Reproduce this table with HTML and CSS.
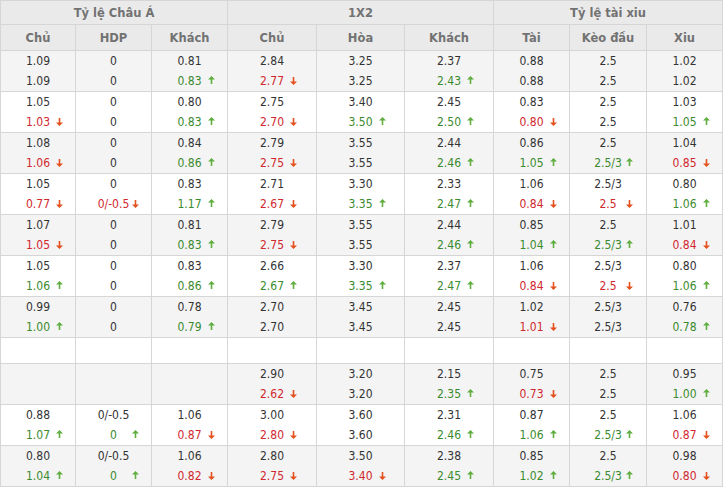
FILE: index.html
```html
<!DOCTYPE html>
<html lang="vi">
<head>
<meta charset="utf-8">
<title>Tỷ lệ kèo</title>
<link rel="stylesheet" href="styles.css">
</head>
<body>
<svg class="defs" width="0" height="0" aria-hidden="true">
  <symbol id="a-up" viewBox="0 0 7 8"><path d="M3.5 0 L7 3.6 L4.3 3.6 L4.3 8 L2.7 8 L2.7 3.6 L0 3.6 Z"/></symbol>
  <symbol id="a-dn" viewBox="0 0 7 8"><path d="M3.5 8 L7 4.4 L4.3 4.4 L4.3 0 L2.7 0 L2.7 4.4 L0 4.4 Z"/></symbol>
</svg>
<table class="odds">
  <colgroup>
    <col class="c-s0"><col class="c-s"><col class="c-s">
    <col class="c-m"><col class="c-m2"><col class="c-m">
    <col class="c-s"><col class="c-s2"><col class="c-s">
  </colgroup>
  <thead>
    <tr class="h1">
      <th colspan="3">Tỷ lệ Châu Á</th>
      <th colspan="3">1X2</th>
      <th colspan="3">Tỷ lệ tài xiu</th>
    </tr>
    <tr class="h2">
      <th>Chủ</th><th>HDP</th><th>Khách</th>
      <th>Chủ</th><th>Hòa</th><th>Khách</th>
      <th>Tài</th><th>Kèo đầu</th><th>Xiu</th>
    </tr>
  </thead>
  <tbody id="rows"></tbody>
</table>
<script src="app.js"></script>
</body>
</html>
```

FILE: app.js
```js
// Each cell: [first value, second value, direction of change ("u", "d" or "")]
const rows = [
  [["1.09","1.09",""],["0","0",""],["0.81","0.83","u"],["2.84","2.77","d"],["3.25","3.25",""],["2.37","2.43","u"],["0.88","0.88",""],["2.5","2.5",""],["1.02","1.02",""]],
  [["1.05","1.03","d"],["0","0",""],["0.80","0.83","u"],["2.75","2.70","d"],["3.40","3.50","u"],["2.45","2.50","u"],["0.83","0.80","d"],["2.5","2.5",""],["1.03","1.05","u"]],
  [["1.08","1.06","d"],["0","0",""],["0.84","0.86","u"],["2.79","2.75","d"],["3.55","3.55",""],["2.44","2.46","u"],["0.86","1.05","u"],["2.5","2.5/3","u"],["1.04","0.85","d"]],
  [["1.05","0.77","d"],["0","0/-0.5","d"],["0.83","1.17","u"],["2.71","2.67","d"],["3.30","3.35","u"],["2.33","2.47","u"],["1.06","0.84","d"],["2.5/3","2.5","d"],["0.80","1.06","u"]],
  [["1.07","1.05","d"],["0","0",""],["0.81","0.83","u"],["2.79","2.75","d"],["3.55","3.55",""],["2.44","2.46","u"],["0.85","1.04","u"],["2.5","2.5/3","u"],["1.01","0.84","d"]],
  [["1.05","1.06","u"],["0","0",""],["0.83","0.86","u"],["2.66","2.67","u"],["3.30","3.35","u"],["2.37","2.47","u"],["1.06","0.84","d"],["2.5/3","2.5","d"],["0.80","1.06","u"]],
  [["0.99","1.00","u"],["0","0",""],["0.78","0.79","u"],["2.70","2.70",""],["3.45","3.45",""],["2.45","2.45",""],["1.02","1.01","d"],["2.5/3","2.5/3",""],["0.76","0.78","u"]],
  null,
  [null,null,null,["2.90","2.62","d"],["3.20","3.20",""],["2.15","2.35","u"],["0.75","0.73","d"],["2.5","2.5",""],["0.95","1.00","u"]],
  [["0.88","1.07","u"],["0/-0.5","0","u"],["1.06","0.87","d"],["3.00","2.80","d"],["3.60","3.60",""],["2.31","2.46","u"],["0.87","1.06","u"],["2.5","2.5/3","u"],["1.06","0.87","d"]],
  [["0.80","1.04","u"],["0/-0.5","0","u"],["1.06","0.82","d"],["2.80","2.75","d"],["3.50","3.40","d"],["2.38","2.45","u"],["0.85","1.02","u"],["2.5","2.5/3","u"],["0.98","0.80","d"]]
];

function line(text, dir) {
  const ln = document.createElement("div");
  ln.className = "ln";
  const s = document.createElement("span");
  s.className = "val" + (dir === "u" ? " up" : dir === "d" ? " dn" : "");
  s.textContent = text;
  ln.appendChild(s);
  if (dir) {
    const ns = "http://www.w3.org/2000/svg";
    const svg = document.createElementNS(ns, "svg");
    svg.setAttribute("class", "ar " + (dir === "u" ? "ar-up" : "ar-dn"));
    svg.setAttribute("width", "7");
    svg.setAttribute("height", "8");
    const use = document.createElementNS(ns, "use");
    use.setAttribute("href", dir === "u" ? "#a-up" : "#a-dn");
    svg.appendChild(use);
    ln.appendChild(svg);
  }
  return ln;
}

const tb = document.getElementById("rows");
rows.forEach((r, i) => {
  const tr = document.createElement("tr");
  tr.className = (i % 2 === 0 ? "alt" : "") + (r === null ? " empty" : "");
  for (let c = 0; c < 9; c++) {
    const td = document.createElement("td");
    const cell = r ? r[c] : null;
    if (cell) {
      td.appendChild(line(cell[0], ""));
      td.appendChild(line(cell[1], cell[2]));
    }
    tr.appendChild(td);
  }
  tb.appendChild(tr);
});
```

FILE: styles.css
```css
html, body {
  margin: 0;
  padding: 0;
  background: #ffffff;
}

.defs {
  position: absolute;
  width: 0;
  height: 0;
  overflow: hidden;
}

.odds {
  border-collapse: separate;
  border-spacing: 1px;
  background: #d6d6d6;
  table-layout: fixed;
  width: 723px;
  font-family: "DejaVu Sans Condensed", Tahoma, "Liberation Sans", sans-serif;
  font-size: 12px;
  color: #333333;
}

.c-s0 { width: 74px; }
.c-s { width: 75px; }
.c-s2 { width: 76px; }
.c-m { width: 88px; }
.c-m2 { width: 87px; }

.odds th,
.odds td {
  padding: 0;
  text-align: center;
  vertical-align: middle;
}

.odds th {
  font-family: "DejaVu Sans", Tahoma, "Liberation Sans", sans-serif;
  font-size: 11.5px;
  font-weight: bold;
  color: #727272;
  background: #eaeaea;
}

.h1 th { height: 23px; }
.h2 th { height: 25px; }

.odds td {
  background: #ffffff;
  height: 40px;
}

.odds tr.alt td {
  background: #f4f4f4;
}

.odds tr.empty td {
  height: 25px;
}

.ln {
  display: grid;
  grid-template-columns: 1fr 36px 1fr;
  align-items: center;
  height: 20px;
}

.val {
  grid-column: 2;
  text-align: center;
  white-space: nowrap;
  justify-self: center;
}

.val.up { color: #3a8a2e; }
.val.dn { color: #d0282e; }

.ar {
  grid-column: 3;
  justify-self: start;
  display: block;
}

.ar-up {
  fill: #5fae3f;
  margin-top: -3px;
}

.ar-dn {
  fill: #e4511f;
}
```
